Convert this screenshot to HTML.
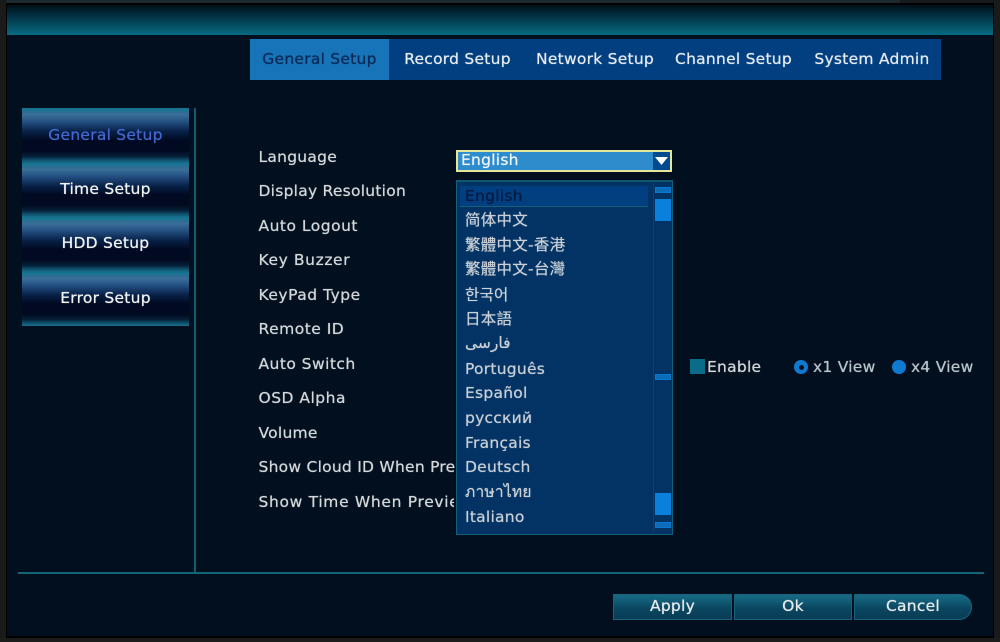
<!DOCTYPE html>
<html><head><meta charset="utf-8">
<style>
html,body{margin:0;padding:0;background:#010f1e;}
#p{position:relative;width:1000px;height:642px;overflow:hidden;background:#010f1e;font-family:"DejaVu Sans","Noto Sans CJK TC",sans-serif;font-size:15.5px;color:#d4d8da;}
#p div{position:absolute;}
.t{white-space:nowrap;line-height:20px;height:20px;letter-spacing:.25px;text-shadow:0 0 .7px currentColor;}
.c{text-align:center;}
.side{left:22px;width:167px;height:54.5px;background:linear-gradient(to bottom,#14708c 0,#1a7694 4%,#2c6c92 7%,#3a6f98 12%,#255284 24%,#08224a 42%,#010a22 58%,#010a20 78%,#062038 88%,#0e4c68 94%,#17708c 100%);}
.sidet{left:22px;width:167px;text-align:center;color:#f2f4f4;}
.lang{left:465px;color:#c9cfd6;}
.btn{top:594px;height:26px;background:linear-gradient(to bottom,#186a84 0,#125c76 25%,#0a4660 55%,#0a3c54 100%);border:1px solid #17627c;box-sizing:border-box;color:#e8ecee;text-align:center;line-height:23px;letter-spacing:.25px;text-shadow:0 0 .7px currentColor;}
</style></head>
<body><div id="p">
<div style="left:0;top:0;width:900px;height:3px;background:#1c2a30"></div>
<div style="left:900px;top:0;width:100px;height:3px;background:#161a1c"></div>
<div style="left:0;top:0;width:6px;height:642px;background:#1a1a1a"></div>
<div style="left:6px;top:3px;width:1px;height:635px;background:#000"></div>
<div style="left:993px;top:3px;width:1px;height:635px;background:#000"></div>
<div style="left:6px;top:3px;width:988px;height:2px;background:#000"></div>
<div style="left:6px;top:636px;width:988px;height:2px;background:#000"></div>
<div style="left:994px;top:0;width:6px;height:642px;background:#1a1a1a"></div>
<div style="left:0;top:638px;width:1000px;height:4px;background:#1c1c1c"></div>
<div style="left:7px;top:5px;width:986px;height:30px;background:linear-gradient(to bottom,#000f18 0,#012c3c 30%,#04485c 62%,#076a80 100%)"></div>

<div style="left:250px;top:39px;width:691px;height:41px;background:#023f80"></div>
<div style="left:250px;top:39px;width:139px;height:41px;background:#1874b8"></div>
<div class="t c" style="left:250px;top:49px;width:139px;color:#062a58">General Setup</div>
<div class="t c" style="left:389px;top:49px;width:137px;color:#e6ecf2">Record Setup</div>
<div class="t c" style="left:526px;top:49px;width:138px;color:#e6ecf2">Network Setup</div>
<div class="t c" style="left:664px;top:49px;width:139px;color:#e6ecf2">Channel Setup</div>
<div class="t c" style="left:803px;top:49px;width:138px;color:#e6ecf2">System Admin</div>

<div class="side" style="top:108px"></div>
<div class="side" style="top:162.5px"></div>
<div class="side" style="top:217px"></div>
<div class="side" style="top:271.5px"></div>
<div class="t sidet" style="top:125px;color:#4468d0">General Setup</div>
<div class="t sidet" style="top:179px">Time Setup</div>
<div class="t sidet" style="top:233px">HDD Setup</div>
<div class="t sidet" style="top:288px">Error Setup</div>

<div style="left:194px;top:108px;width:2px;height:465px;background:#0f5f70"></div>
<div style="left:18px;top:572px;width:966px;height:2px;background:#136578"></div>

<div class="t" style="left:258.5px;top:147px">Language</div>
<div class="t" style="left:258.5px;top:181px">Display Resolution</div>
<div class="t" style="left:258.5px;top:216px;letter-spacing:.5px">Auto Logout</div>
<div class="t" style="left:258.5px;top:250px;letter-spacing:.6px">Key Buzzer</div>
<div class="t" style="left:258.5px;top:285px;letter-spacing:.5px">KeyPad Type</div>
<div class="t" style="left:258.5px;top:319px;letter-spacing:.5px">Remote ID</div>
<div class="t" style="left:258.5px;top:354px;letter-spacing:.45px">Auto Switch</div>
<div class="t" style="left:258.5px;top:388px;letter-spacing:.5px">OSD Alpha</div>
<div class="t" style="left:258.5px;top:423px">Volume</div>
<div class="t" style="left:258.5px;top:457px;width:197.5px;overflow:hidden">Show Cloud ID When Preview</div>
<div class="t" style="left:258.5px;top:492px;width:195.5px;overflow:hidden;letter-spacing:.68px">Show Time When Preview</div>

<div style="left:456px;top:150px;width:216px;height:22px;box-sizing:border-box;border:2px solid #e4e79a;background:#2e8ccc"></div>
<div class="t" style="left:461px;top:150px;color:#f0f6fa">English</div>
<div style="left:653px;top:152px;width:17px;height:18px;background:#024a90"></div>
<svg style="position:absolute;left:653px;top:152px" width="17" height="18"><path d="M2 5H15L8.5 13Z" fill="#fff"/></svg>

<div style="left:456px;top:180px;width:217px;height:355px;box-sizing:border-box;border:1px solid #13607c;border-top:2px solid #0f5670;background:#023364"></div>
<div style="left:460px;top:186px;width:188px;height:21px;background:#023f80;border-bottom:1px solid #14607c;box-sizing:border-box"></div>
<div style="left:653px;top:183px;width:1px;height:349px;background:#03417a"></div>
<div style="left:655px;top:187px;width:16px;height:6px;background:#0d6cb8;border:1px solid #0a78d0;box-sizing:border-box"></div>
<div style="left:655px;top:199px;width:16px;height:22px;background:#0a7fdc"></div>
<div style="left:655px;top:374px;width:16px;height:6px;background:#0d6cb8;border:1px solid #0a78d0;box-sizing:border-box"></div>
<div style="left:655px;top:493px;width:16px;height:22px;background:#0a7fdc"></div>
<div style="left:655px;top:522px;width:16px;height:6px;background:#0d6cb8;border:1px solid #0a78d0;box-sizing:border-box"></div>

<div class="t lang" style="top:186px;color:#021a40">English</div>
<div class="t lang" style="top:210px">简体中文</div>
<div class="t lang" style="top:235px">繁體中文-香港</div>
<div class="t lang" style="top:259px">繁體中文-台灣</div>
<div class="t lang" style="top:285px">한국어</div>
<div class="t lang" style="top:309px">日本語</div>
<div class="t lang" style="top:333px">فارسی</div>
<div class="t lang" style="top:359px">Português</div>
<div class="t lang" style="top:383px">Español</div>
<div class="t lang" style="top:408px">русский</div>
<div class="t lang" style="top:433px">Français</div>
<div class="t lang" style="top:457px">Deutsch</div>
<div class="t lang" style="top:482px">ภาษาไทย</div>
<div class="t lang" style="top:507px">Italiano</div>

<div style="left:690px;top:359px;width:15px;height:15px;background:#0a6c88"></div>
<div class="t" style="left:707px;top:357px">Enable</div>
<div style="left:794px;top:360px;width:14px;height:14px;border-radius:50%;background:#0f7ad2"></div>
<div style="left:798.5px;top:364.5px;width:5px;height:5px;border-radius:50%;background:#02101e"></div>
<div class="t" style="left:813px;top:357px;color:#bcc4cc">x1 View</div>
<div style="left:892px;top:360px;width:14px;height:14px;border-radius:50%;background:#0f7ad2"></div>
<div class="t" style="left:911px;top:357px;color:#bcc4cc">x4 View</div>

<div class="btn" style="left:613px;width:119px">Apply</div>
<div class="btn" style="left:734px;width:118px">Ok</div>
<div class="btn" style="left:854px;width:118px;border-radius:0 13px 13px 0">Cancel</div>
</div></body></html>
